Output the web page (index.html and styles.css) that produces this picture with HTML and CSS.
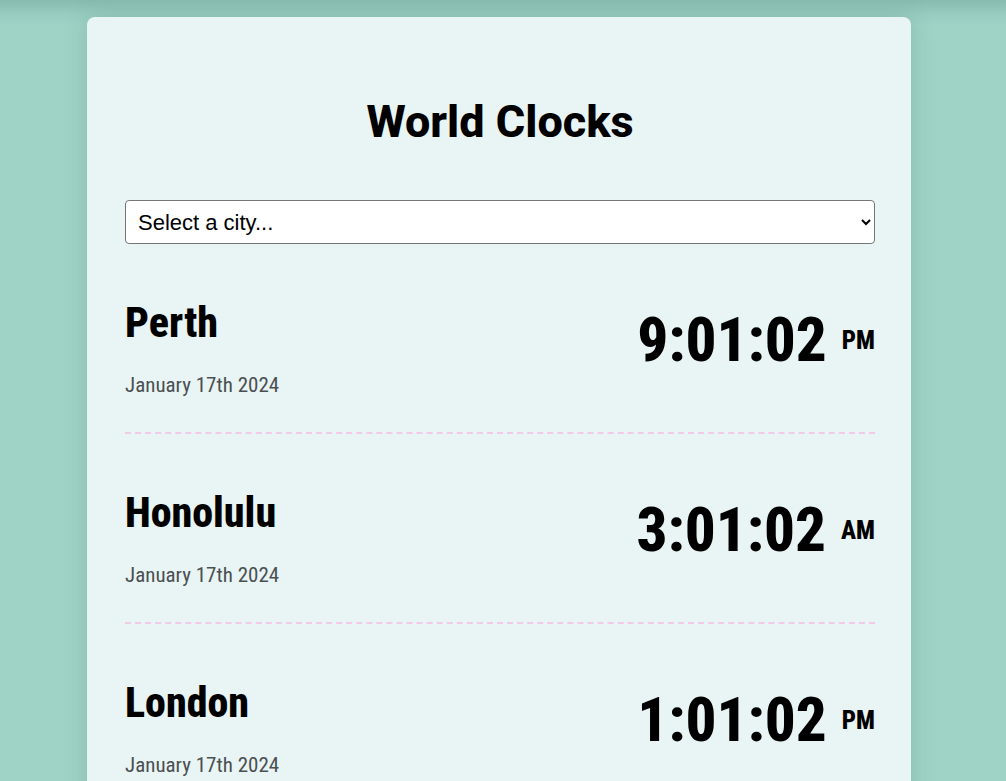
FILE: index.html
```html
<!DOCTYPE html>
<html lang="en">
<head>
<meta charset="utf-8">
<title>World Clocks</title>
<link rel="stylesheet" href="styles.css">
</head>
<body>
<div class="card">
  <h1 class="title">World Clocks</h1>
  <select class="city-select">
    <option>Select a city...</option>
    <option>Perth</option>
    <option>Honolulu</option>
    <option>London</option>
  </select>
  <div class="city">
    <div class="city-info">
      <h2 class="city-name">Perth</h2>
      <div class="city-date">January 17th 2024</div>
    </div>
    <div class="city-time"><span class="clock">9:01:02</span><span class="ampm">PM</span></div>
  </div>
  <div class="city">
    <div class="city-info">
      <h2 class="city-name">Honolulu</h2>
      <div class="city-date">January 17th 2024</div>
    </div>
    <div class="city-time"><span class="clock">3:01:02</span><span class="ampm">AM</span></div>
  </div>
  <div class="city">
    <div class="city-info">
      <h2 class="city-name">London</h2>
      <div class="city-date">January 17th 2024</div>
    </div>
    <div class="city-time"><span class="clock">1:01:02</span><span class="ampm">PM</span></div>
  </div>
</div>
</body>
</html>
```

FILE: styles.css
```css
html, body { margin: 0; padding: 0; }
body {
  background: linear-gradient(to bottom, #88bbaf 0, #98ccc0 14px, #9fd3c6 26px) no-repeat, #9fd3c6;
  margin-right: 8px;
  padding-top: 17px;
  color: #000;
  font-family: "Roboto", "Open Sans", sans-serif;
  font-stretch: 75%;
}
.card {
  width: 750px;
  margin: 0 auto;
  padding: 38px 36px 0 38px;
  background: #e8f5f4;
  border-radius: 8px;
  box-shadow: 0 0 24px rgba(40, 90, 80, 0.18);
  min-height: 900px;
}
.title {
  margin: 45px 0 0;
  font-size: 45px;
  font-stretch: 88%;
  line-height: 44px;
  font-weight: 800;
  text-align: center;
}
.city-select {
  display: block;
  box-sizing: border-box;
  width: 100%;
  height: 44px;
  margin-top: 56px;
  padding: 0 8px;
  font-family: "Liberation Sans", Arial, sans-serif;
  font-stretch: normal;
  font-size: 22px;
  color: #000;
  background: #fff;
  border: 1px solid #767676;
  border-radius: 4px;
}
.city {
  display: flex;
  justify-content: space-between;
  align-items: flex-start;
  padding: 58px 0 36px;
  border-bottom: 2px dashed #f2c9e6;
}
.city-name { margin: 0; font-size: 42px; line-height: 1; font-weight: 800; }
.city-date { margin-top: 31px; font-size: 21px; line-height: 1; color: #4b4f52; }
.city-time { display: flex; align-items: center; gap: 15px; margin-top: 8px; }
.clock { font-size: 61px; line-height: 1; font-weight: 800; }
.ampm { font-size: 25px; line-height: 1; font-weight: 800; }
```
